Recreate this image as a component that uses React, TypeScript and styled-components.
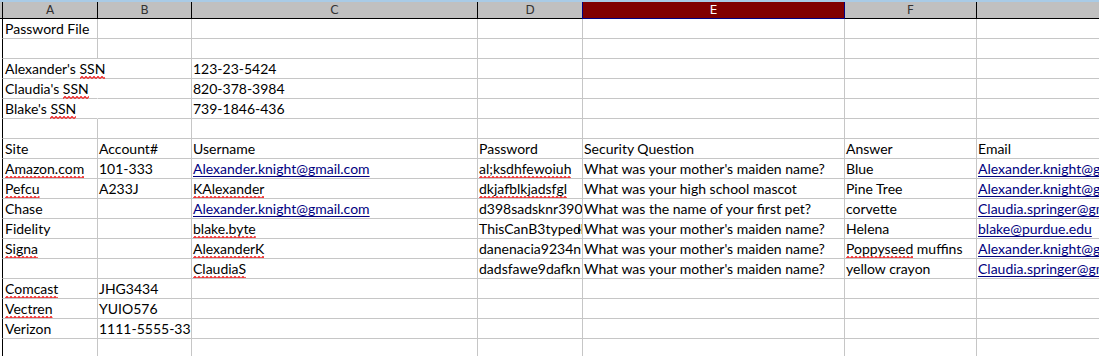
import React from "react";
import styled, { createGlobalStyle, css } from "styled-components";

const GlobalStyle = createGlobalStyle`
  html, body {
    margin: 0;
    padding: 0;
    background: #ffffff;
    overflow: hidden;
  }
  body {
    width: 1099px;
    height: 356px;
  }
`;

// edge + columns A..G
const COLUMNS = "3px 95px 94px 286px 105px 262px 132px 300px";

const Frame = styled.div`
  width: 1099px;
  height: 356px;
  overflow: hidden;
  background: #ffffff;
  display: flex;
  flex-direction: column;
`;

const TopEdge = styled.div`
  height: 2px;
  width: 100%;
  flex: none;
  background: #a9cbe6;
`;

const HeaderRow = styled.div`
  display: grid;
  grid-template-columns: ${COLUMNS};
  height: 17px;
  flex: none;
  background: #c0c0c0;
`;

const HeadEdge = styled.div`
  border-right: 1px solid #000000;
  border-bottom: 1px solid #000000;
  box-sizing: border-box;
`;

const HeadCell = styled.div<{ $selected?: boolean }>`
  box-sizing: border-box;
  display: flex;
  align-items: center;
  justify-content: center;
  font-family: "DejaVu Sans", "Liberation Sans", sans-serif;
  font-size: 12px;
  color: #333333;
  border-right: 1px solid #000000;
  border-bottom: 1px solid #000000;
  ${(p) =>
    p.$selected &&
    css`
      background: #800000;
      color: #ffffff;
      border-left: 1px solid #000080;
      border-right: 1px solid #000080;
      border-bottom: 1px solid #000080;
      margin-left: -1px;
    `}
`;

const Row = styled.div`
  display: grid;
  grid-template-columns: ${COLUMNS};
  height: 20px;
  flex: none;
`;

const RowEdge = styled.div`
  box-sizing: border-box;
  border-right: 1px solid #000000;
  border-bottom: 1px solid #ffffff;
`;

const Cell = styled.div<{ $spill?: boolean; $first?: boolean }>`
  position: relative;
  box-sizing: border-box;
  border-right: 1px solid ${(p) => (p.$spill ? "#ffffff" : "#c6c6c6")};
  border-bottom: 1px solid #c6c6c6;
  padding: 0 1px 1px ${(p) => (p.$first ? "2px" : "1px")};
  display: flex;
  align-items: flex-end;
  overflow: ${(p) => (p.$spill ? "visible" : "hidden")};
  white-space: nowrap;
  font-family: Lato, "Open Sans", sans-serif;
  font-size: 14px;
  line-height: 17px;
  color: #000000;
  z-index: ${(p) => (p.$spill ? 1 : 0)};
`;

const Text = styled.span`
  position: relative;
`;

const Spell = styled.span`
  position: relative;
  display: inline-block;
`;

// red zigzag drawn under a word the spell checker flags
const Squiggle = styled.svg`
  position: absolute;
  left: 0;
  bottom: -2px;
  width: 100%;
  height: 3px;
  overflow: hidden;
  pointer-events: none;
`;

const Link = styled.span`
  color: #000080;
  text-decoration: underline;
  text-decoration-color: #000080;
  text-decoration-thickness: 1px;
  text-underline-offset: 2px;
  text-decoration-skip-ink: none;
`;

// small marker shown where text runs past the cell's right edge
const ClipMark = styled.span`
  position: absolute;
  right: 1px;
  top: 8px;
  width: 0;
  height: 0;
  border-top: 3px solid transparent;
  border-bottom: 3px solid transparent;
  border-left: 3px solid #000000;
  z-index: 2;
`;

type Part = string | { spell: string } | { link: string };
type CellData = Part[] | null;

const s = (t: string): Part => ({ spell: t });
const l = (t: string): Part => ({ link: t });

const HEADERS = ["A", "B", "C", "D", "E", "F", "G"];
const SELECTED = "E";

const ROWS: CellData[][] = [
  [["Password File"], null, null, null, null, null, null],
  [null, null, null, null, null, null, null],
  [["Alexander's ", s("SSN")], null, ["123-23-5424"], null, null, null, null],
  [["Claudia's ", s("SSN")], null, ["820-378-3984"], null, null, null, null],
  [["Blake's ", s("SSN")], null, ["739-1846-436"], null, null, null, null],
  [null, null, null, null, null, null, null],
  [["Site"], ["Account#"], ["Username"], ["Password"], ["Security Question"], ["Answer"], ["Email"]],
  [
    [s("Amazon.com")],
    ["101-333"],
    [l("Alexander.knight@gmail.com")],
    [s("al;ksdhfewoiuh")],
    ["What was your mother's maiden name?"],
    ["Blue"],
    [l("Alexander.knight@gmail.com")],
  ],
  [
    [s("Pefcu")],
    ["A233J"],
    [s("KAlexander")],
    [s("dkjafblkjadsfgl")],
    ["What was your high school mascot"],
    ["Pine Tree"],
    [l("Alexander.knight@gmail.com")],
  ],
  [
    ["Chase"],
    null,
    [l("Alexander.knight@gmail.com")],
    ["d398sadsknr390"],
    ["What was the name of your first pet?"],
    ["corvette"],
    [l("Claudia.springer@gmail.com")],
  ],
  [
    ["Fidelity"],
    null,
    [s("blake.byte")],
    ["ThisCanB3typedByAnyone"],
    ["What was your mother's maiden name?"],
    ["Helena"],
    [l("blake@purdue.edu")],
  ],
  [
    [s("Signa")],
    null,
    [s("AlexanderK")],
    ["danenacia9234n"],
    ["What was your mother's maiden name?"],
    [s("Poppyseed"), " muffins"],
    [l("Alexander.knight@gmail.com")],
  ],
  [
    null,
    null,
    [s("ClaudiaS")],
    ["dadsfawe9dafkn"],
    ["What was your mother's maiden name?"],
    ["yellow crayon"],
    [l("Claudia.springer@gmail.com")],
  ],
  [[s("Comcast")], ["JHG3434"], null, null, null, null, null],
  [[s("Vectren")], ["YUIO576"], null, null, null, null, null],
  [["Verizon"], ["1111-5555-33"], null, null, null, null, null],
  [null, null, null, null, null, null, null],
];

// cells whose text is cut off by a filled neighbour
const CLIPPED = new Set(["10-3"]);
// cells joined with the empty cell to their right
const SPILL = new Set(["2-0", "3-0", "4-0"]);

let squiggleId = 0;

function SpellWord({ word }: { word: string }) {
  const id = React.useMemo(() => `zig${squiggleId++}`, []);
  return (
    <Spell>
      {word}
      <Squiggle aria-hidden="true">
        <defs>
          <pattern id={id} width="4" height="3" patternUnits="userSpaceOnUse">
            <path d="M0 2.5 L2 0.5 L4 2.5" fill="none" stroke="#ee1d1d" strokeWidth="1.2" />
          </pattern>
        </defs>
        <rect x="0" y="0" width="100%" height="3" fill={`url(#${id})`} />
      </Squiggle>
    </Spell>
  );
}

function renderPart(p: Part, i: number) {
  if (typeof p === "string") return <React.Fragment key={i}>{p}</React.Fragment>;
  if ("spell" in p) return <SpellWord key={i} word={p.spell} />;
  return <Link key={i}>{p.link}</Link>;
}

export default function App() {
  return (
    <>
      <GlobalStyle />
      <Frame>
        <TopEdge />
        <HeaderRow>
          <HeadEdge />
          {HEADERS.map((h) => (
            <HeadCell key={h} $selected={h === SELECTED}>
              {h}
            </HeadCell>
          ))}
        </HeaderRow>
        {ROWS.map((row, r) => (
          <Row key={r}>
            <RowEdge />
            {row.map((cell, c) => (
              <Cell key={c} $first={c === 0} $spill={SPILL.has(`${r}-${c}`)}>
                {cell && <Text>{cell.map(renderPart)}</Text>}
                {CLIPPED.has(`${r}-${c}`) && <ClipMark />}
              </Cell>
            ))}
          </Row>
        ))}
      </Frame>
    </>
  );
}
